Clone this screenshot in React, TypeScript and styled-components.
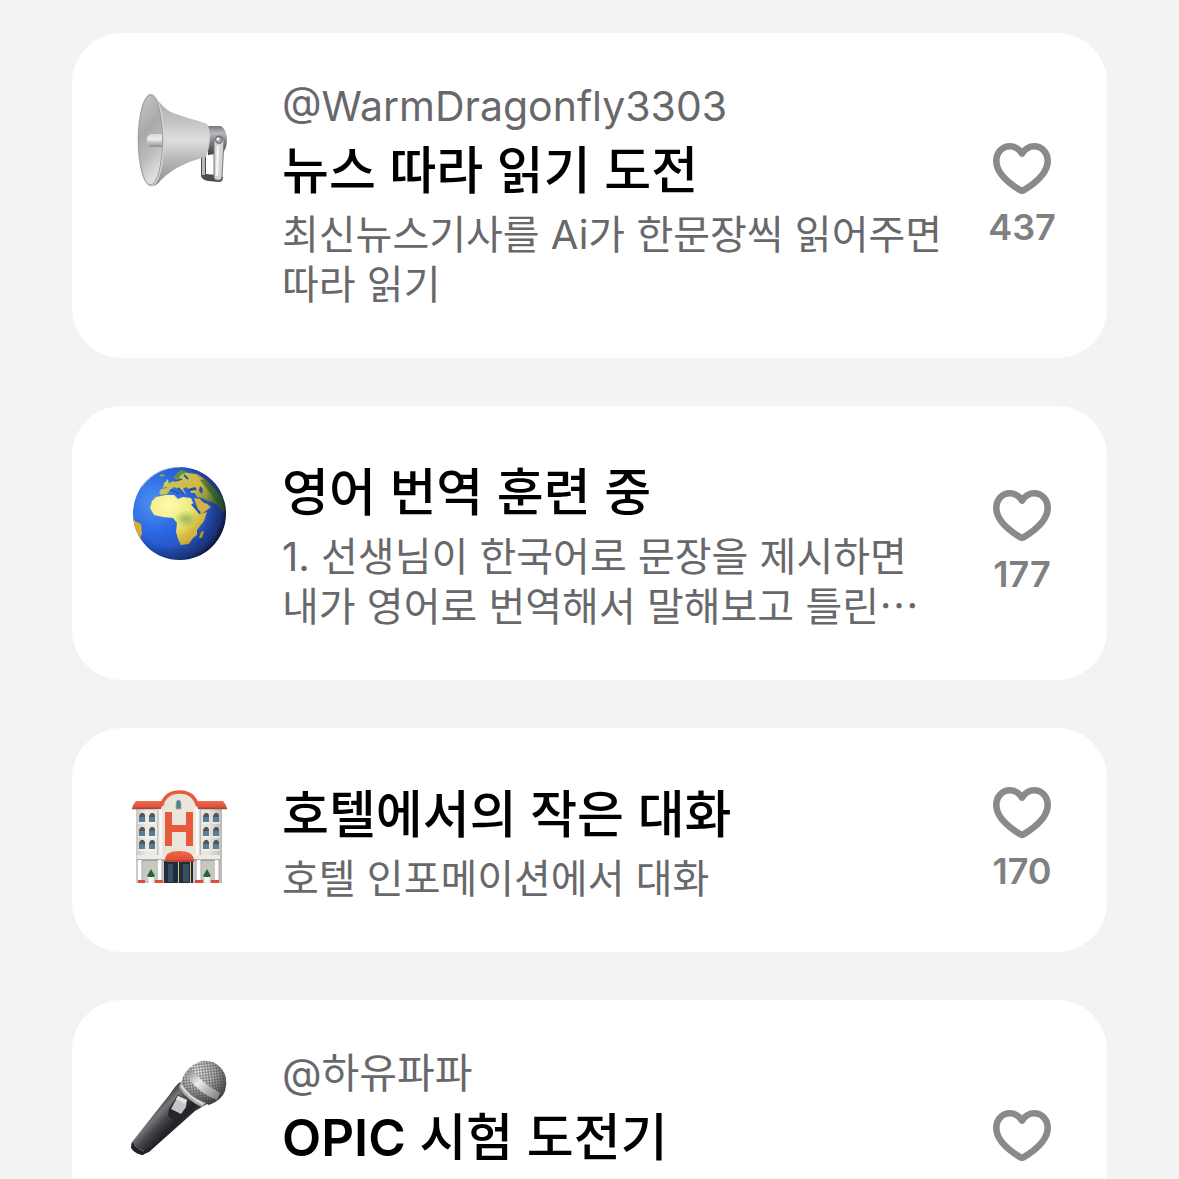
import React from "react";
import styled, { createGlobalStyle } from "styled-components";

const GlobalStyle = createGlobalStyle`
  * { box-sizing: border-box; }
  body {
    margin: 0;
    background: #f3f3f3;
    font-family: Inter, "Noto Sans CJK KR", sans-serif;
    word-break: keep-all;
  }
`;

const Feed = styled.main`
  height: 100vh;
  overflow: hidden;
  padding: 33px 72px 0;
`;

const CardList = styled.ul`
  display: flex;
  flex-direction: column;
  gap: 48px;
  margin: 0;
  padding: 0;
  list-style: none;
`;

const Card = styled.li<{ $tall?: boolean }>`
  display: flex;
  flex-shrink: 0;
  min-height: ${({ $tall }) => ($tall ? "325px" : "0")};
  padding: 48px 24px 48px 48px;
  border-radius: 50px;
  background: #ffffff;
`;

const Picture = styled.svg`
  flex: none;
  width: 120px;
  height: 120px;
`;

const Body = styled.article`
  flex: 1;
  min-width: 0;
  margin-left: 42px;
`;

const Author = styled.p`
  margin: 0;
  color: #68686b;
  font-size: 41px;
  line-height: 51px;
`;

const Title = styled.h2`
  margin: 0;
  color: #000000;
  font-size: 51px;
  font-weight: 500;
  line-height: 78px;
`;

const Acronym = styled.span`
  font-weight: 600;
`;

const Description = styled.p`
  margin: 0;
  color: #68686b;
  font-size: 40px;
  line-height: 50px;
`;

const Likes = styled.div`
  display: flex;
  flex: none;
  flex-direction: column;
  align-items: center;
  align-self: center;
  width: 122px;
  height: 108px;
`;

const LikeButton = styled.button`
  display: flex;
  padding: 0;
  border: 0;
  background: none;
  cursor: pointer;
`;

const HeartDrawing = styled.svg`
  width: 60px;
  height: 54px;
  fill: none;
  stroke: #8a8a8c;
  stroke-width: 6.6;
  stroke-linejoin: round;
`;

const Count = styled.span`
  margin-top: 9px;
  color: #808082;
  font-size: 36px;
  font-weight: 600;
  line-height: 44px;
`;

function Heart() {
  return (
    <HeartDrawing viewBox="0 0 60 54" aria-hidden="true">
      <path d="M30 11.500C26.500 6.500 22.300 4.300 18 4.300C10.200 4.300 4.300 10.400 4.300 19C4.300 31 15.500 40.500 28.500 48.400Q30 49.200 31.500 48.400C44.500 40.500 55.700 31 55.700 19C55.700 10.400 49.800 4.300 42 4.300C37.700 4.300 33.500 6.500 30 11.500Z" />
    </HeartDrawing>
  );
}

function Megaphone() {
  return (
    <Picture viewBox="0 2 120 120" aria-hidden="true">
      <defs>
        <linearGradient id="horn" x1="0" y1="0" x2="0" y2="1">
          <stop offset="0" stopColor="#a8a8a8" />
          <stop offset=".3" stopColor="#c3c3c3" />
          <stop offset=".5" stopColor="#dedede" />
          <stop offset=".7" stopColor="#b9b9b9" />
          <stop offset="1" stopColor="#8d8d8d" />
        </linearGradient>
        <linearGradient id="mouth" x1="0" y1="0" x2=".3" y2="1">
          <stop offset="0" stopColor="#c9c9c9" />
          <stop offset=".45" stopColor="#a9a9a9" />
          <stop offset=".75" stopColor="#bdbdbd" />
          <stop offset="1" stopColor="#dedede" />
        </linearGradient>
        <linearGradient id="driver" x1="0" y1="0" x2="0" y2="1">
          <stop offset="0" stopColor="#77777b" />
          <stop offset=".25" stopColor="#b9b9c4" />
          <stop offset=".6" stopColor="#77777d" />
          <stop offset="1" stopColor="#3f3f43" />
        </linearGradient>
        <linearGradient id="stem" x1="0" y1="0" x2="0" y2="1">
          <stop offset="0" stopColor="#d8d8d8" />
          <stop offset=".4" stopColor="#eeeeee" />
          <stop offset="1" stopColor="#8c8c8c" />
        </linearGradient>
      </defs>
      <path d="M88 47L101 47Q107 51 107 61Q107 70 102 74L88 76Z" fill="url(#driver)" />
      <path d="M81 78V97Q82 101 88 102L99 103Q103 103 103 98L96 96L86 95V77Z" fill="#4d4d50" />
      <path d="M83.500 77V96" stroke="#b9b9bb" strokeWidth="3" />
      <path d="M94 62Q94 57 99 57Q104 57 104 62L102 98Q101 102 97 101Q94 101 94 98Z" fill="#d5d5d6" stroke="#77777a" strokeWidth="1" />
      <path d="M98 67L97 97" stroke="#f5f5f5" strokeWidth="2.500" />
      <circle cx="99" cy="61" r="3.500" fill="#a0a0a3" stroke="#555558" strokeWidth=".8" />
      <circle cx="98" cy="60" r="1.500" fill="#fff" />
      <path d="M31 15C40 22 43 30 53 34C65 38 79 42 87 45C91 50 91 67 86 78C70 82 54 88 41 101Q36 108 31 107Z" fill="url(#horn)" />
      <ellipse cx="31" cy="61" rx="13.500" ry="46.500" fill="#d3d3d3" />
      <ellipse cx="30.500" cy="61" rx="12" ry="45" fill="url(#mouth)" stroke="#9b9b9b" strokeWidth="1" />
      <path d="M42 55H31Q26 57 27 62Q27 67 31 68H42Z" fill="url(#stem)" />
    </Picture>
  );
}

function Globe() {
  return (
    <Picture viewBox="0 -1 120 120" aria-hidden="true">
      <defs>
        <radialGradient id="sea" cx=".28" cy=".4" r=".78">
          <stop offset="0" stopColor="#4d91f3" />
          <stop offset=".35" stopColor="#2865df" />
          <stop offset=".72" stopColor="#2447ab" />
          <stop offset="1" stopColor="#13234d" />
        </radialGradient>
        <linearGradient id="land" x1="0" y1="0" x2="1" y2=".5">
          <stop offset="0" stopColor="#c6cb59" />
          <stop offset=".6" stopColor="#d4b846" />
          <stop offset="1" stopColor="#477a35" />
        </linearGradient>
        <radialGradient id="sahara" gradientUnits="userSpaceOnUse" cx="48" cy="50" r="55">
          <stop offset="0" stopColor="#fffab0" />
          <stop offset=".4" stopColor="#f0ea7e" />
          <stop offset=".65" stopColor="#d3b93f" />
          <stop offset="1" stopColor="#c59a34" />
        </radialGradient>
        <radialGradient id="shade" cx=".38" cy=".42" r=".65">
          <stop offset=".65" stopColor="#000" stopOpacity="0" />
          <stop offset=".88" stopColor="#101935" stopOpacity=".42" />
          <stop offset="1" stopColor="#050812" stopOpacity=".85" />
        </radialGradient>
        <radialGradient id="jungle">
          <stop offset="0" stopColor="#86b45a" stopOpacity=".9" />
          <stop offset="1" stopColor="#9eb84c" stopOpacity="0" />
        </radialGradient>
        <clipPath id="disc"><circle cx="59.500" cy="58.500" r="46.500" /></clipPath>
      </defs>
      <g clipPath="url(#disc)">
        <rect width="120" height="120" fill="url(#sea)" />
        <path d="M39 38L41 34L47 33L46 30L51 27L56 26L57 20L62 16L68 18L77 19L86 25L99 38L107 52L104 57L99 52L94 48L88 46L82 43L77 42L75 38L71 38L70 35L66 32L63 34L66 39L63 38L59 34L54 32L50 35L47 39L41 40Z" fill="url(#land)" />
        <path d="M44 28L48 24L49 31L43 33Z" fill="#c7ce55" />
        <path d="M41 19L45 20L43 22L39 21Z" fill="#88a849" />
        <path d="M53 23L57 18L61 15L67 17L61 20L58 25Z" fill="#62923e" />
        <path d="M36 42L46 40L54 40L58 44L63 42L71 43L75 52L79 59L87 57L84 66L77 75L77 80L73 83L69 89L61 90L58 84L56 77L57 68L53 63L43 62L34 60L30 53L32 46Z" fill="url(#sahara)" />
        <path d="M74 43L81 44L91 52L83 58L79 58Z" fill="#d6b143" />
        <ellipse cx="66" cy="64" rx="12" ry="9" fill="url(#jungle)" />
        <path d="M72 49L80 58M81 44L86 48" stroke="#2453b7" strokeWidth="2" fill="none" />
        <path d="M68 34L75 32L77 35L69 36ZM80 31L83 34L82 39L79 36Z" fill="#244fac" />
        <path d="M50 35L56 37L59 39M58 33L64 39M55 26L62 24M64 20L68 24" stroke="#2854ae" strokeWidth="1.800" fill="none" />
        <path d="M81 77L84 76L82 83L79 83Z" fill="#d2aa37" />
        <path d="M11 60L15 66L21 69L22 78L20 85L15 81Z" fill="#d7ac38" />
        <path d="M86 24L103 42L106 56L101 53L91 39L80 25Z" fill="#326f34" opacity=".65" />
        <circle cx="59.500" cy="58.500" r="46.500" fill="url(#shade)" />
        <path d="M22 31Q37 12 60 12" stroke="#b7d6e5" strokeWidth="1.500" opacity=".6" fill="none" />
      </g>
    </Picture>
  );
}

const windowSpots = [22, 32, 86, 96].flatMap((x) => [38, 52, 65].map((y) => [x, y]));

function Hotel() {
  return (
    <Picture viewBox="0 -4 120 120" aria-hidden="true">
      <defs>
        <linearGradient id="wall" x1="0" x2="1">
          <stop offset="0" stopColor="#c9c9c9" />
          <stop offset=".12" stopColor="#eeeae0" />
          <stop offset=".85" stopColor="#e8e4dc" />
          <stop offset="1" stopColor="#bababa" />
        </linearGradient>
        <linearGradient id="tower" x1="0" x2="1">
          <stop offset="0" stopColor="#bcbcbc" />
          <stop offset=".07" stopColor="#fafafa" />
          <stop offset=".15" stopColor="#e9e4d9" />
          <stop offset=".85" stopColor="#ece7dc" />
          <stop offset=".93" stopColor="#ffffff" />
          <stop offset="1" stopColor="#b1b1b1" />
        </linearGradient>
        <linearGradient id="roof" x1="0" y1="0" x2="0" y2="1">
          <stop offset="0" stopColor="#ef6b4b" />
          <stop offset="1" stopColor="#d94832" />
        </linearGradient>
      </defs>
      <rect x="16" y="29" width="86" height="74" fill="url(#wall)" />
      <path d="M16 21H47V29H12Q13 24 16 21ZM72 21H103Q106 24 107 29H72Z" fill="url(#roof)" />
      <path d="M12 28.500H43M76 28.500H107" stroke="#9c4b3e" strokeWidth="1.500" />
      <path d="M37 103V29H41Q45 13 59.500 12Q74 13 78 29H81V103Z" fill="url(#tower)" />
      <path d="M41.500 26Q45 12 59.500 12Q74 12 77.500 26" fill="none" stroke="#e65b40" strokeWidth="3.500" />
      <path d="M56 29V24Q56 20 58.500 20Q61 20 61 24V29Z" fill="#547f99" stroke="#adaaa4" strokeWidth=".7" />
      {windowSpots.map(([x, y]) => (
        <g key={`${x}-${y}`}>
          <path d={`M${x - 3} ${y + 4}V${y - 1}Q${x - 2} ${y - 5} ${x} ${y - 5}Q${x + 3} ${y - 5} ${x + 3} ${y - 1}V${y + 4}Z`} fill="#567f96" />
          <path d={`M${x - 3} ${y - 1}Q${x - 2} ${y - 5} ${x} ${y - 5}Q${x + 3} ${y - 5} ${x + 3} ${y - 1}`} fill="#55545b" />
          <path d={`M${x - 4} ${y + 5}H${x + 4}`} stroke="#fff" strokeWidth="1" />
        </g>
      ))}
      <path d="M45 32H52V45H66V32H73V66H66V52H52V66H45Z" fill="#e75b3c" />
      <rect x="18" y="76" width="81" height="27" fill="#c9c7c3" />
      <path d="M44 81H73V103H44Z" fill="#202b3b" />
      <path d="M48 84H53V102H48ZM63 84H69V102H63Z" fill="#364f62" />
      <path d="M58.500 82V103M70.500 82V103" stroke="#dcc77e" strokeWidth="1" />
      <rect x="17" y="75" width="83" height="5" fill="#eeeae4" />
      <path d="M17 80H45M73 80H100" stroke="#777572" strokeWidth="1" />
      <path d="M45 80Q45 71 59 71Q73 71 74 80L70 82H48Z" fill="url(#roof)" />
      <path d="M45 81H74" stroke="#b34330" strokeWidth="1.500" />
      {[20, 40, 79, 97].map((x) => (
        <g key={x}>
          <rect x={x - 2} y="80" width="4" height="22" fill="#fff" />
          <path d={`M${x + 2} 80V101`} stroke="#aaa" strokeWidth="1" />
        </g>
      ))}
      <path d="M18 100H25V103H18ZM35 100H43V103H35ZM75 100H83V103H75ZM91 100H99V103H91Z" fill="#d95038" />
      {[31, 87].map((x) => (
        <g key={x}>
          <path d={`M${x} 89L${x + 4} 96Q${x} 99 ${x - 4} 96Z`} fill="#216832" />
          <path d={`M${x - 3} 97H${x + 3}L${x + 2} 103H${x - 2}Z`} fill="#f8f8f8" />
        </g>
      ))}
    </Picture>
  );
}

function Microphone() {
  return (
    <Picture viewBox="0 -2 120 120" aria-hidden="true">
      <defs>
        <linearGradient id="handle" gradientUnits="userSpaceOnUse" x1="30" y1="60" x2="55" y2="84">
          <stop offset="0" stopColor="#343436" />
          <stop offset=".25" stopColor="#77777a" />
          <stop offset=".5" stopColor="#434348" />
          <stop offset=".8" stopColor="#202029" />
          <stop offset="1" stopColor="#353540" />
        </linearGradient>
        <radialGradient id="head" cx=".35" cy=".25" r=".75">
          <stop offset="0" stopColor="#e6e6e5" />
          <stop offset=".5" stopColor="#adadad" />
          <stop offset="1" stopColor="#4a4a4c" />
        </radialGradient>
        <linearGradient id="band" gradientUnits="userSpaceOnUse" x1="66" y1="24" x2="97" y2="53">
          <stop offset="0" stopColor="#8e8e8e" />
          <stop offset=".35" stopColor="#ededed" />
          <stop offset=".65" stopColor="#b2b2b2" />
          <stop offset="1" stopColor="#79797b" />
        </linearGradient>
        <pattern id="mesh" width="4" height="4" patternUnits="userSpaceOnUse" patternTransform="rotate(38)">
          <circle cx="1" cy="1" r=".8" fill="#29292c" />
          <circle cx="3" cy="3" r=".8" fill="#29292c" />
        </pattern>
      </defs>
      <path d="M60 32Q55 36 50 44L12 92L11 96Q13 102 22 105L29 102L75 61L87 54Z" fill="url(#handle)" />
      <path d="M12 92Q17 99 28 101L23 105Q15 104 11 98Z" fill="#222226" />
      <path d="M14 95Q18 99 24 101" stroke="#707075" strokeWidth="1" fill="none" />
      <path d="M61 34Q64 18 79 12Q91 8 101 18Q109 27 105 41Q102 50 89 55Q71 49 61 34Z" fill="url(#head)" />
      <path d="M61 34Q64 18 79 12Q91 8 101 18Q109 27 105 41Q102 50 89 55Q71 49 61 34Z" fill="url(#mesh)" />
      <path d="M71 18Q80 32 100 43L97 50Q79 44 66 25Z" fill="url(#band)" />
      <path d="M61 32Q69 47 86 53L82 57Q67 51 59 37Z" fill="#aaaaab" />
      <path d="M61 35Q68 47 83 54" stroke="#e1e1e1" strokeWidth="1.500" fill="none" />
      <path d="M49 59L58 45L69 52L66 59L55 71L48 66Z" fill="#25252a" />
      <path d="M58 46L67 50L66 57L61 64L51 59Z" fill="#c5c5c6" />
      <path d="M58 46L67 50L65 54L56 49Z" fill="#e4e4e4" />
    </Picture>
  );
}

function LikeCounter({ count }: { count?: number }) {
  return (
    <Likes>
      <LikeButton type="button"><Heart /></LikeButton>
      {count !== undefined && <Count>{count}</Count>}
    </Likes>
  );
}

export default function App() {
  return (
    <>
      <GlobalStyle />
      <Feed>
        <CardList>
          <Card>
            <Megaphone />
            <Body>
              <Author>@WarmDragonfly3303</Author>
              <Title>뉴스 따라 읽기 도전</Title>
              <Description>최신뉴스기사를 Ai가 한문장씩 읽어주면 따라 읽기</Description>
            </Body>
            <LikeCounter count={437} />
          </Card>
          <Card>
            <Globe />
            <Body>
              <Title>영어 번역 훈련 중</Title>
              <Description>
                1. 선생님이 한국어로 문장을 제시하면 내가 영어로 번역해서 말해보고 틀린⋯
              </Description>
            </Body>
            <LikeCounter count={177} />
          </Card>
          <Card>
            <Hotel />
            <Body>
              <Title>호텔에서의 작은 대화</Title>
              <Description>호텔 인포메이션에서 대화</Description>
            </Body>
            <LikeCounter count={170} />
          </Card>
          <Card $tall>
            <Microphone />
            <Body>
              <Author>@하유파파</Author>
              <Title><Acronym>OPIC</Acronym> 시험 도전기</Title>
            </Body>
            <LikeCounter />
          </Card>
        </CardList>
      </Feed>
    </>
  );
}
